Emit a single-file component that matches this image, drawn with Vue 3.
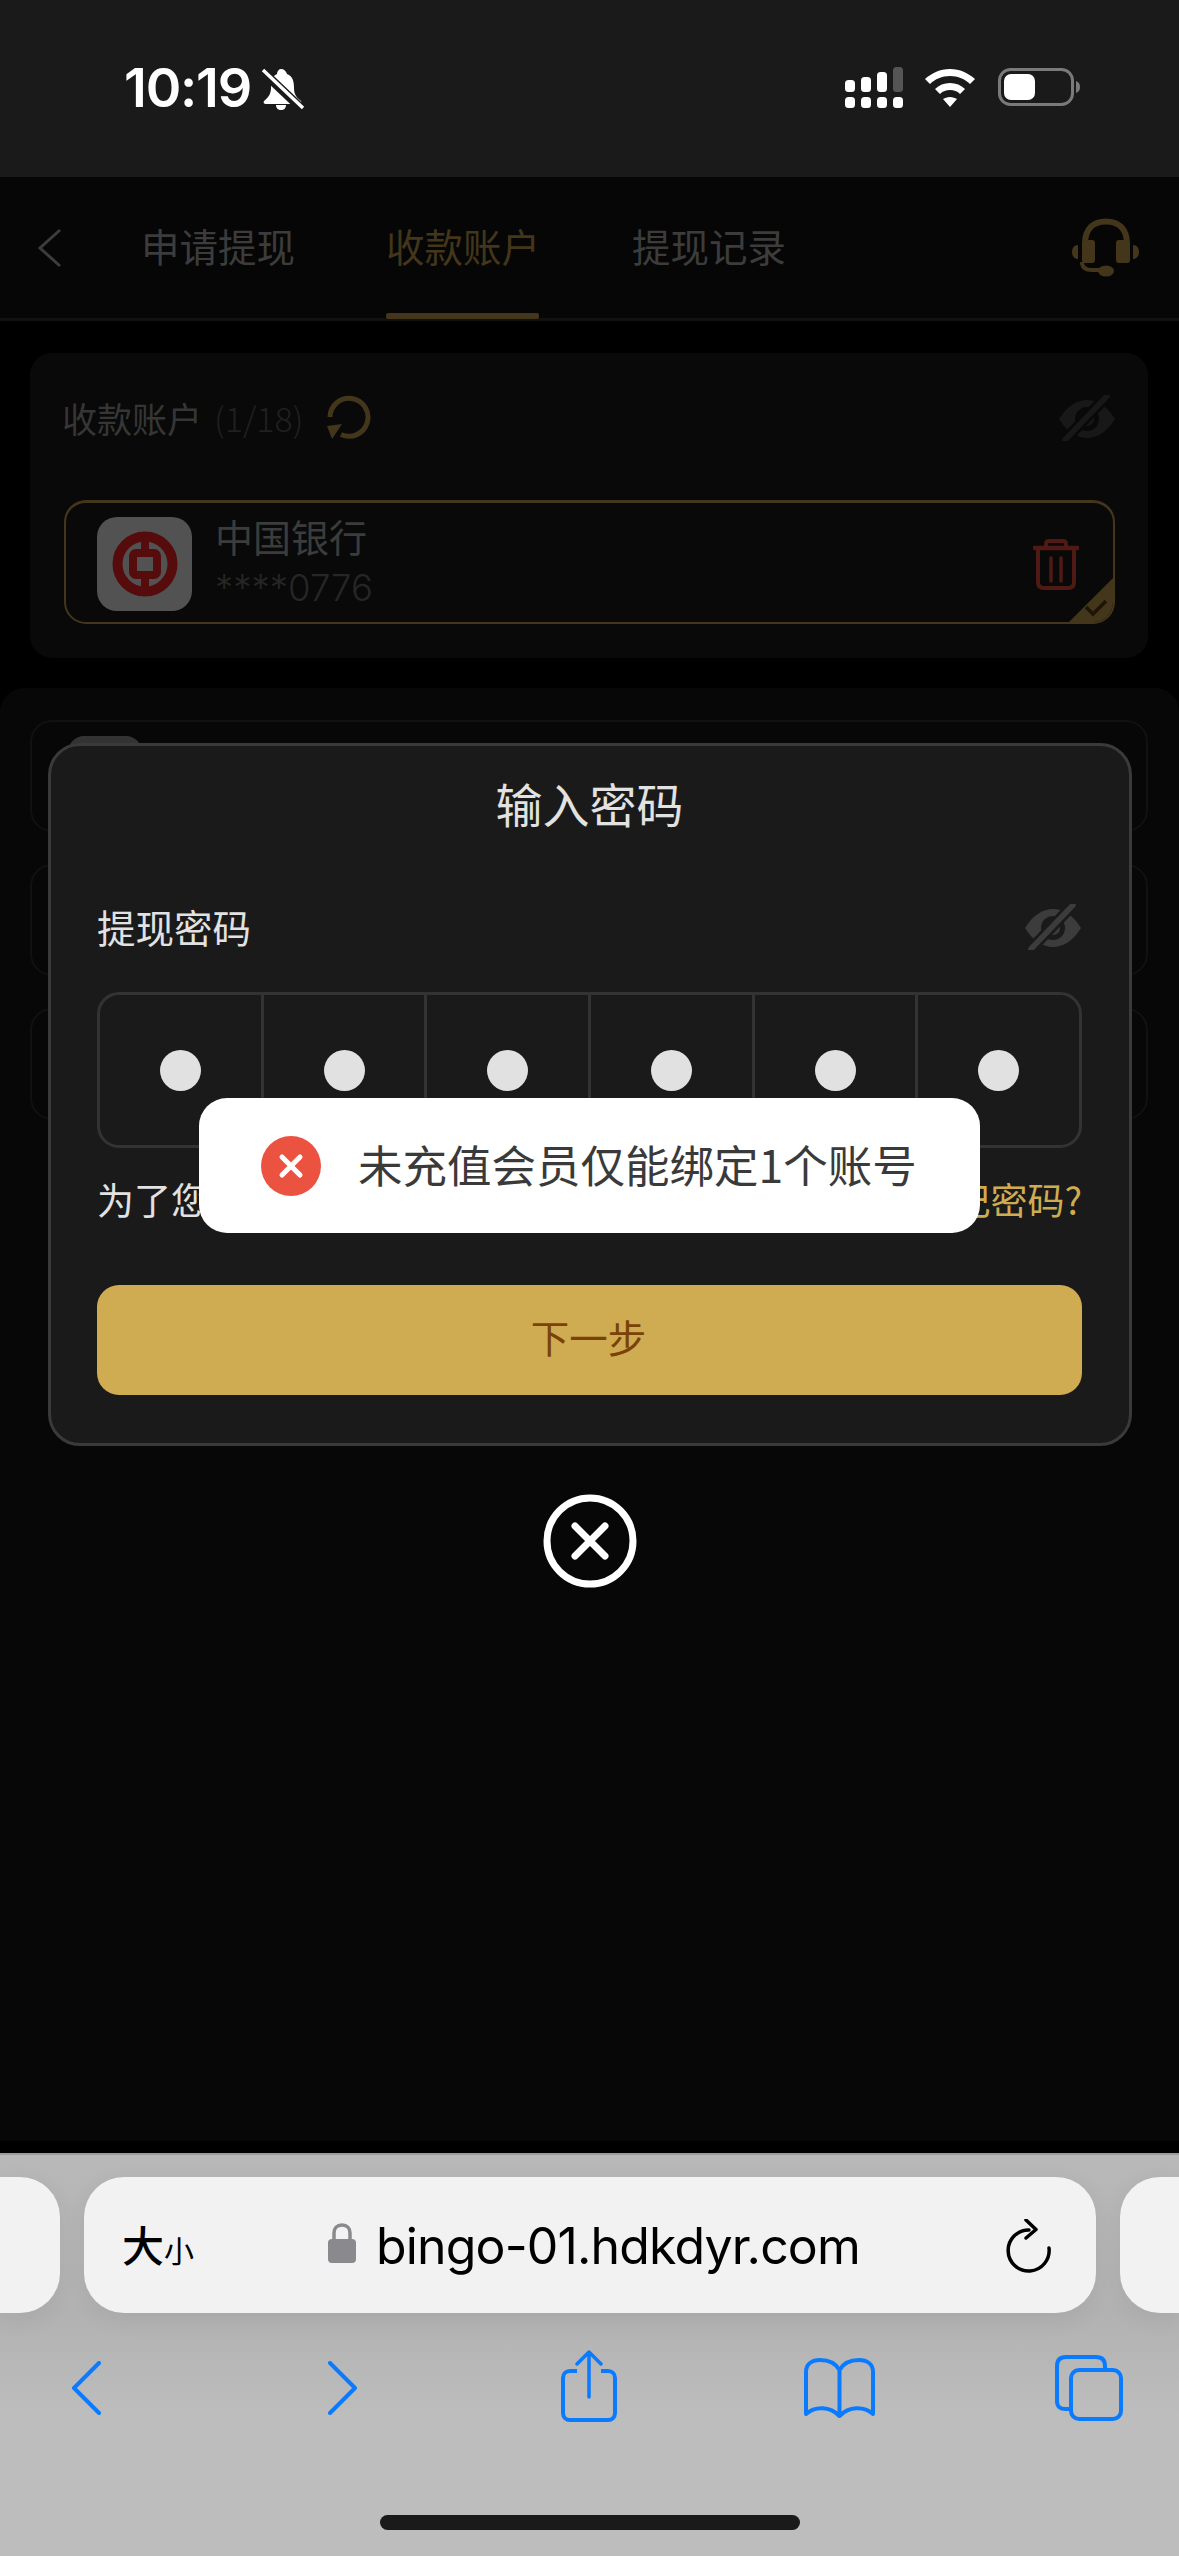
<script setup>
const tabs = [
  { label: '申请提现', active: false },
  { label: '收款账户', active: true },
  { label: '提现记录', active: false },
]
const digits = [1, 2, 3, 4, 5, 6]
const rows = [1, 2, 3]
</script>

<template>
  <div class="screen">
    <header class="status">
      <div class="time">10:19</div>
      <svg class="bell" width="44" height="44" viewBox="0 0 44 44">
        <path d="M20 2c3 0 5 2 6 5 6 2 7 8 7 14 0 6 2 9 7 13 1 2 0 3-2 3H5c-2 0-3-1-2-3 5-4 7-8 7-13 0-7 1-12 6-14 0-3 2-5 4-5z" fill="#fff"/>
        <path d="M15 38h10c0 3-2 5-5 5s-5-2-5-5z" fill="#fff"/>
        <path d="M0 3l40 38" stroke="#1a1a1a" stroke-width="9"/>
        <path d="M2 3l40 38" stroke="#fff" stroke-width="3.4"/>
      </svg>
      <div class="spacer"></div>
      <svg class="signal" width="58" height="42" viewBox="0 0 58 42">
        <rect x="0" y="13" width="10" height="12" rx="3.5" fill="#fff"/>
        <rect x="16" y="10" width="10" height="15" rx="3.5" fill="#fff"/>
        <rect x="32" y="5" width="10" height="20" rx="3.5" fill="#fff"/>
        <rect x="48" y="0" width="10" height="25" rx="3.5" fill="#555"/>
        <rect x="0" y="30" width="10" height="11" rx="3.5" fill="#fff"/>
        <rect x="16" y="30" width="10" height="11" rx="3.5" fill="#fff"/>
        <rect x="32" y="30" width="10" height="11" rx="3.5" fill="#fff"/>
        <rect x="48" y="30" width="10" height="11" rx="3.5" fill="#fff"/>
      </svg>
      <svg class="wifi" width="50" height="38" viewBox="0 0 50 38">
        <path d="M25 0C15 0 7 4 0 10l5 5c5-5 12-8 20-8s15 3 20 8l5-5C43 4 35 0 25 0z" fill="#fff"/>
        <path d="M25 14c-6 0-11 2-15 6l5 5c3-3 6-4 10-4s7 1 10 4l5-5c-4-4-9-6-15-6z" fill="#fff"/>
        <path d="M25 28c-3 0-5 1-7 2l7 8 7-8c-2-1-4-2-7-2z" fill="#fff"/>
      </svg>
      <svg class="battery" width="83" height="38" viewBox="0 0 83 38">
        <rect x="1.5" y="1.5" width="73" height="35" rx="11" fill="none" stroke="#7a7a7a" stroke-width="3"/>
        <rect x="6" y="6" width="31" height="26" rx="7" fill="#fff"/>
        <path d="M78 13c3 1 4 3 4 6s-1 5-4 6z" fill="#7a7a7a"/>
      </svg>
    </header>

    <main class="viewport">
      <div class="page">
        <nav class="nav">
          <svg class="back" width="26" height="40" viewBox="0 0 26 40">
            <path d="M23 2L3 20l20 18" fill="none" stroke="#3c3c3c" stroke-width="3"/>
          </svg>
          <div v-for="t in tabs" :key="t.label" class="tab" :class="{ on: t.active }">{{ t.label }}</div>
          <svg class="headset" width="68" height="60" viewBox="0 0 68 60">
            <path d="M13 26C13 10 22 3.500 34 3.500S55 10 55 26" fill="none" stroke="#43361a" stroke-width="6"/>
            <rect x="10" y="22" width="13" height="23" rx="3" fill="#43361a"/>
            <rect x="44" y="22" width="14" height="23" rx="3" fill="#43361a"/>
            <path d="M6 27v14c-4 0-6-3-6-7s2-7 6-7zM61 27c4 0 6 3 6 7s-2 7-6 7z" fill="#43361a"/>
            <path d="M10 44c0 6 4 8 10 8h10" fill="none" stroke="#43361a" stroke-width="4"/>
            <ellipse cx="34" cy="53" rx="8" ry="5.500" fill="#43361a"/>
          </svg>
        </nav>

        <section class="card">
          <div class="card-head">
            <span class="card-title">收款账户</span>
            <span class="count">(1/18)</span>
            <svg class="refresh" width="44" height="46" viewBox="0 0 44 46">
              <path d="M3 22A19 19 0 1 1 14 39.500" fill="none" stroke="#43361a" stroke-width="5"/>
              <path d="M0 31l15-2-10 15z" fill="#43361a"/>
            </svg>
            <svg class="eye dim" width="56" height="46" viewBox="0 0 56 46">
              <path d="M0 24C8 11 18 5 28 5s20 6 28 19c-8 13-18 19-28 19S8 37 0 24z" fill="currentColor"/>
              <circle cx="28" cy="24" r="12" fill="#090909"/>
              <circle cx="28" cy="24" r="7" fill="currentColor"/>
              <path d="M6 45L48 1" stroke="#090909" stroke-width="11"/>
              <path d="M6 45L48 1" stroke="currentColor" stroke-width="5.500" stroke-linecap="round"/>
            </svg>
          </div>
          <div class="account">
            <div class="bank">
              <svg width="66" height="66" viewBox="0 0 66 66">
                <circle cx="33" cy="33" r="27.5" fill="none" stroke="#560c0c" stroke-width="10"/>
                <path d="M33 2v62" stroke="#560c0c" stroke-width="8"/>
                <rect x="21" y="22" width="24" height="22" rx="3" fill="#525252" stroke="#560c0c" stroke-width="8"/>
              </svg>
            </div>
            <div class="acc-text">
              <div class="acc-name">中国银行</div>
              <div class="acc-no">****0776</div>
            </div>
            <svg class="trash" width="46" height="52" viewBox="0 0 46 52">
              <path d="M1.500 10h43" stroke="#4f1914" stroke-width="4.500" stroke-linecap="round"/>
              <path d="M13 9V6c0-2 1-3 3-3h14c2 0 3 1 3 3v3" fill="none" stroke="#4f1914" stroke-width="4"/>
              <path d="M5 11v33c0 4 2 6 6 6h24c4 0 6-2 6-6V11" fill="none" stroke="#4f1914" stroke-width="4"/>
              <path d="M18 20v23M28 20v23" stroke="#4f1914" stroke-width="3.500" stroke-linecap="round"/>
            </svg>
            <svg class="corner" width="44" height="44" viewBox="0 0 44 44">
              <path d="M44 0v32c0 7-5 12-12 12H0z" fill="#43361a"/>
              <path d="M17 29l7 7 13-13" fill="none" stroke="#1f1405" stroke-width="3.500"/>
            </svg>
          </div>
        </section>

        <section class="sheet">
          <div v-for="r in rows" :key="r" class="sheet-row">
            <div v-if="r === 1" class="peek"></div>
          </div>
        </section>
      </div>

      <div class="overlay">
        <div class="modal">
          <h2 class="modal-title">输入密码</h2>
          <div class="pw-label">
            <span>提现密码</span>
            <svg class="eye modal-eye" width="56" height="46" viewBox="0 0 56 46">
              <path d="M0 24C8 11 18 5 28 5s20 6 28 19c-8 13-18 19-28 19S8 37 0 24z" fill="currentColor"/>
              <circle cx="28" cy="24" r="12" fill="#1a1a1a"/>
              <circle cx="28" cy="24" r="7" fill="currentColor"/>
              <path d="M6 45L48 1" stroke="#1a1a1a" stroke-width="11"/>
              <path d="M6 45L48 1" stroke="currentColor" stroke-width="5.500" stroke-linecap="round"/>
            </svg>
          </div>
          <div class="pw-box">
            <div v-for="d in digits" :key="d" class="pw-cell"><i class="dot"></i></div>
          </div>
          <div class="note">
            <span>为了您的账户安全，请输入提现密码</span>
            <span class="forgot">忘记密码?</span>
          </div>
          <button class="next" type="button">下一步</button>
        </div>
        <svg class="close" width="94" height="94" viewBox="0 0 94 94">
          <circle cx="47" cy="47" r="43" fill="none" stroke="#fff" stroke-width="7"/>
          <path d="M32 32l30 30M62 32L32 62" stroke="#fff" stroke-width="7" stroke-linecap="round"/>
        </svg>
      </div>

      <div class="toast">
        <svg width="60" height="60" viewBox="0 0 60 60">
          <circle cx="30" cy="30" r="30" fill="#ec5240"/>
          <path d="M21 21l18 18M39 21L21 39" stroke="#fff" stroke-width="5" stroke-linecap="round"/>
        </svg>
        <span class="toast-text">未充值会员仅能绑定1个账号</span>
      </div>
    </main>

    <footer class="browser">
      <div class="pills">
        <div class="pill side left"></div>
        <div class="pill url">
          <span class="aa"><b>大</b><small>小</small></span>
          <svg class="lock" width="28" height="40" viewBox="0 0 28 40">
            <path d="M6 18V10c0-5 3-8 8-8s8 3 8 8v8" fill="none" stroke="#8a8a8e" stroke-width="3.500"/>
            <rect x="0" y="16" width="28" height="24" rx="4" fill="#8a8a8e"/>
          </svg>
          <span class="domain">bingo-01.hdkdyr.com</span>
          <svg class="reload" width="48" height="54" viewBox="0 0 48 54">
            <path d="M24 11A20.500 20.500 0 1 0 44 29" fill="none" stroke="#000" stroke-width="3.500" stroke-linecap="round"/>
            <path d="M21 1l10 9.500-10 8.500" fill="none" stroke="#000" stroke-width="3.500" stroke-linecap="round" stroke-linejoin="round"/>
          </svg>
        </div>
        <div class="pill side right"></div>
      </div>
      <div class="tools">
        <svg class="t-back" width="30" height="54" viewBox="0 0 30 54">
          <path d="M28 2L3 27l25 25" fill="none" stroke="#0a7aff" stroke-width="4" stroke-linecap="round" stroke-linejoin="round"/>
        </svg>
        <svg class="t-fwd" width="30" height="54" viewBox="0 0 30 54">
          <path d="M2 2l25 25L2 52" fill="none" stroke="#0a7aff" stroke-width="4" stroke-linecap="round" stroke-linejoin="round"/>
        </svg>
        <svg class="t-share" width="56" height="72" viewBox="0 0 56 72">
          <path d="M16 21H9c-4 0-7 3-7 7v35c0 4 3 7 7 7h38c4 0 7-3 7-7V28c0-4-3-7-7-7h-7" fill="none" stroke="#0a7aff" stroke-width="4"/>
          <path d="M28 47V2M16 14L28 2l12 12" fill="none" stroke="#0a7aff" stroke-width="3.500" stroke-linecap="round" stroke-linejoin="round"/>
        </svg>
        <svg class="t-book" width="71" height="60" viewBox="0 0 71 60">
          <path d="M35.500 12C31 4 24 2 16 2 8 2 2 6 2 14v42c9-8 24-8 33.500 2 9.500-10 24.500-10 33.500-2V14c0-8-6-12-14-12-8 0-15 2-19.500 10zM35.500 12v46" fill="none" stroke="#0a7aff" stroke-width="4" stroke-linejoin="round"/>
        </svg>
        <svg class="t-tabs" width="68" height="66" viewBox="0 0 68 66">
          <path d="M50 14v-3c0-6-3-9-9-9H11C5 2 2 5 2 11v35c0 6 3 8 9 8h4" fill="none" stroke="#0a7aff" stroke-width="4"/>
          <rect x="16" y="15" width="50" height="49" rx="8" fill="none" stroke="#0a7aff" stroke-width="4"/>
        </svg>
      </div>
      <div class="home"></div>
    </footer>
  </div>
</template>

<style>
html, body { margin: 0; background: #000; }
</style>

<style scoped>
.screen {
  width: 1179px;
  height: 2556px;
  display: flex;
  flex-direction: column;
  overflow: hidden;
  background: #000;
  font-family: "Noto Sans CJK SC", "Noto Sans", sans-serif;
}

.status {
  height: 177px;
  flex: none;
  box-sizing: border-box;
  background: #1a1a1a;
  display: flex;
  align-items: flex-start;
  padding: 0 98px 0 124px;
  color: #fff;
}
.time {
  font-family: Inter, sans-serif;
  font-weight: 600;
  font-size: 54px;
  line-height: 40px;
  margin-top: 68px;
  letter-spacing: -1.2px;
}
.bell { margin: 67px 0 0 10px; }
.spacer { flex: 1; }
.signal { margin-top: 67px; }
.wifi { margin: 69px 0 0 22px; }
.battery { margin: 68px 0 0 23px; }

.viewport { position: relative; flex: 1; min-height: 0; }
.page { height: 100%; display: flex; flex-direction: column; }

.nav {
  height: 141px;
  flex: none;
  border-bottom: 3px solid #111;
  background: #060606;
  display: flex;
  align-items: flex-start;
  color: #3c3c3c;
  font-size: 38.500px;
  padding-left: 37px;
}
.back { margin: 51px 78px 0 0; }
.tab {
  position: relative;
  height: 141px;
  line-height: 137px;
  width: 153px;
  margin-right: 92px;
  text-align: center;
  white-space: nowrap;
}
.tab:nth-of-type(2) { margin-right: 93px; }
.tab.on { color: #43361a; }
.tab.on::after {
  content: "";
  position: absolute;
  left: 0;
  right: 0;
  bottom: -1px;
  height: 6px;
  border-radius: 2px;
  background: #43361a;
}
.headset { margin: 41px 39px 0 auto; }

.card {
  flex: none;
  height: 305px;
  box-sizing: border-box;
  margin: 32px 31px 0 30px;
  background: #090909;
  border-radius: 22px;
  padding: 36px 33px 0 34px;
}
.card-head {
  height: 58px;
  display: flex;
  align-items: center;
  color: #363636;
  font-size: 35px;
  line-height: 58px;
}
.card-title { margin-left: -2px; }
.count { margin-left: 12px; color: #202020; font-size: 34px; font-weight: 300; }
.refresh { margin-left: 24px; }
.eye { margin-left: auto; }
.eye.dim { color: #181818; }
.account {
  position: relative;
  height: 124px;
  box-sizing: border-box;
  margin-top: 53px;
  border: 2px solid #43361a;
  border-top-width: 3px;
  border-radius: 22px;
  display: flex;
  align-items: center;
  padding: 2px 0 0 31px;
  overflow: hidden;
}
.bank {
  width: 95px;
  height: 94px;
  flex: none;
  border-radius: 20px;
  background: #525252;
  display: flex;
  align-items: center;
  justify-content: center;
}
.acc-text { margin-left: 23px; display: flex; flex-direction: column; }
.acc-name { color: #3c3c3c; font-size: 38px; line-height: 48px; margin-top: -3px; }
.acc-no { color: #262626; font-size: 36.500px; line-height: 50px; margin-top: 3px; font-family: Inter, sans-serif; font-weight: 300; }
.trash { margin: 0 34px 0 auto; }
.corner { position: absolute; right: 0; bottom: 0; }

.sheet {
  flex: 1;
  margin: 30px 0 12px;
  min-height: 0;
  background: #070707;
  border-radius: 24px 24px 0 0;
  padding: 32px 31px 0 30px;
  display: flex;
  flex-direction: column;
  gap: 32px;
}
.sheet-row {
  position: relative;
  height: 108px;
  border: 2px solid #111;
  border-radius: 22px;
}
.peek {
  position: absolute;
  left: 36px;
  top: 14px;
  width: 74px;
  height: 60px;
  border-radius: 16px;
  background: #333;
}

.overlay {
  position: absolute;
  left: 48px;
  top: 566px;
  width: 1084px;
  display: flex;
  flex-direction: column;
  align-items: center;
}
.modal {
  width: 100%;
  box-sizing: border-box;
  height: 703px;
  background: #1a1a1a;
  border: 3px solid #3a3a3a;
  border-radius: 32px;
  padding: 27px 47px 0 46px;
  color: #e2e2e2;
  display: flex;
  flex-direction: column;
}
.modal-title {
  margin: 0;
  height: 60px;
  line-height: 60px;
  text-align: center;
  font-size: 47px;
  font-weight: 400;
}
.pw-label {
  margin-top: 68px;
  height: 50px;
  display: flex;
  align-items: center;
  font-size: 38.500px;
  line-height: 50px;
}
.modal-eye { color: #3c3c3c; margin: 1px 1px 0 auto; }
.pw-box {
  margin-top: 41px;
  height: 156px;
  box-sizing: border-box;
  border: 3px solid #333;
  border-radius: 22px;
  display: flex;
  overflow: hidden;
}
.pw-cell {
  flex: 1;
  display: flex;
  align-items: center;
  justify-content: center;
  border-left: 3px solid #333;
}
.pw-cell:first-child { border-left: 0; }
.dot { width: 41px; height: 41px; border-radius: 50%; background: #e1e1e1; }
.note {
  margin-top: 26px;
  height: 50px;
  line-height: 50px;
  display: flex;
  justify-content: space-between;
  font-size: 37px;
  white-space: nowrap;
}
.forgot { color: #cfac52; }
.next {
  margin-top: 61px;
  height: 110px;
  border: 0;
  border-radius: 22px;
  padding: 0 2px 8px 0;
  background: #cfac52;
  color: #7a4206;
  font: inherit;
  font-size: 38.500px;
}
.close { margin-top: 48px; }

.toast {
  position: absolute;
  left: 199px;
  top: 921px;
  width: 781px;
  height: 135px;
  box-sizing: border-box;
  background: #fff;
  border-radius: 28px;
  padding-left: 62px;
  display: flex;
  align-items: center;
  gap: 37px;
  color: #3a3a3a;
  font-size: 44.500px;
  white-space: nowrap;
}
.toast-text { margin-top: -5px; }

.browser {
  height: 403px;
  flex: none;
  box-sizing: border-box;
  border-top: 2px solid #9c9c9c;
  background: linear-gradient(#b8b8b8, #b2b2b2 40%, #bdbdbd 65%);
  padding-top: 22px;
  display: flex;
  flex-direction: column;
}
.pills { display: flex; gap: 24px; height: 136px; flex: none; }
.pill { background: #f2f2f2; height: 136px; box-shadow: 0 6px 24px rgba(0,0,0,.06); }
.side { width: 60px; flex: none; }
.side.left { border-radius: 0 40px 40px 0; }
.side.right { width: 59px; border-radius: 40px 0 0 40px; }
.url {
  width: 1012px;
  flex: none;
  border-radius: 40px;
  display: flex;
  align-items: center;
  color: #000;
  padding-left: 38px;
  box-sizing: border-box;
}
.aa { width: 75px; display: flex; align-items: baseline; white-space: nowrap; margin-top: -4px; }
.aa b { font-size: 42px; font-weight: 500; }
.aa small { font-size: 30px; }
.lock { margin-left: 131px; margin-top: -4px; }
.domain {
  margin-left: 20px;
  font-family: Inter, sans-serif;
  font-size: 50px;
  letter-spacing: -.85px;
  margin-top: 2px;
}
.reload { margin-left: auto; margin-right: 43px; margin-top: 2px; }
.tools { position: relative; height: 90px; display: flex; align-items: flex-start; margin-top: 37px; flex: none; }
.t-back { margin: 11px 0 0 71px; }
.t-fwd { margin: 11px 0 0 227px; }
.t-share { margin: 0 0 0 203px; }
.t-book { margin: 8px 0 0 187px; }
.t-tabs { margin: 5px 0 0 180px; }
.home {
  width: 420px;
  height: 15px;
  border-radius: 8px;
  background: #1a1a1a;
  margin: 75px auto 0;
}
</style>
